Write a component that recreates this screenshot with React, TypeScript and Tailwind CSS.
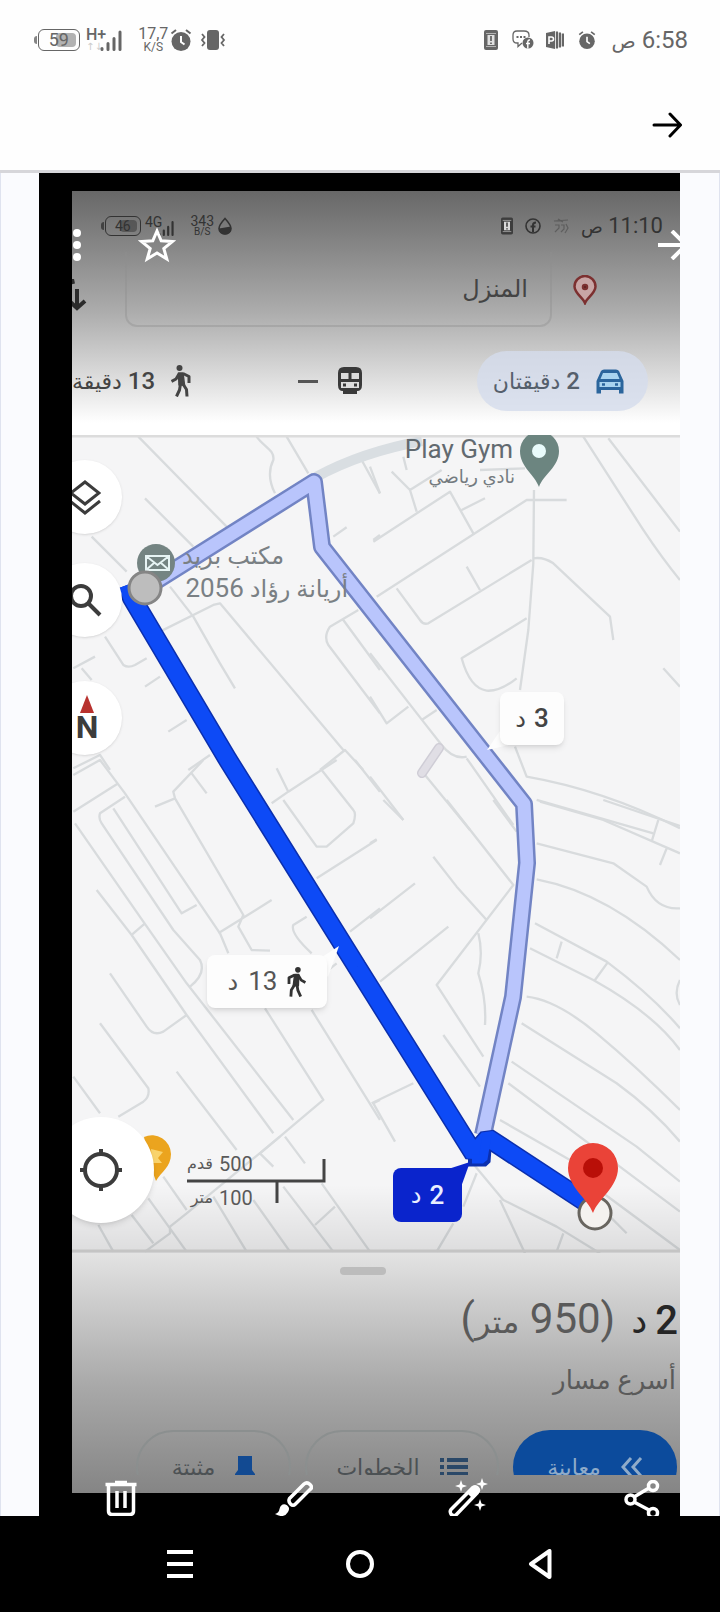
import React from "react";

type IconProps = { className?: string };

function ArrowRight({ className }: IconProps) {
  return (
    <svg viewBox="0 0 30 26" className={className} fill="none" stroke="currentColor" strokeWidth="3" strokeLinecap="round" strokeLinejoin="round">
      <path d="M2 13H28M18 2L28.500 13L18 24" />
    </svg>
  );
}

function SignalBars({ className }: IconProps) {
  return (
    <svg viewBox="0 0 22 22" className={className} stroke="currentColor" strokeWidth="3" strokeLinecap="round">
      <path d="M2 19.500V20.500M8 14.500V20.500M14 9.500V20.500M20 3V20.500" />
    </svg>
  );
}

function Alarm({ className }: IconProps) {
  return (
    <svg viewBox="0 0 22 24" className={className} fill="none" stroke="currentColor">
      <circle cx="11" cy="13.500" r="9.500" fill="currentColor" stroke="none" />
      <path d="M1.500 5.500L6 2M20.500 5.500L16 2" strokeWidth="2" />
      <path d="M11 8V14L14.500 16.500" stroke="#fff" strokeWidth="2" />
    </svg>
  );
}

function Vibrate({ className }: IconProps) {
  return (
    <svg viewBox="0 0 26 22" className={className} fill="none" stroke="currentColor" strokeWidth="1.800">
      <rect x="7" y="1" width="12" height="20" rx="3" fill="currentColor" stroke="none" />
      <path d="M2 5L4.500 8L2 11L4.500 14L2 17M24 5L21.500 8L24 11L21.500 14L24 17" />
    </svg>
  );
}

function PhoneAlert({ className }: IconProps) {
  return (
    <svg viewBox="0 0 14 20" className={className}>
      <rect width="14" height="20" rx="2" fill="currentColor" />
      <path d="M2 3.500H12M2 16.500H12" stroke="#fff" opacity=".5" />
      <rect x="3.500" y="5" width="7" height="10" fill="#fff" opacity=".8" />
      <path d="M7 6V11M7 12.500V14" stroke="currentColor" strokeWidth="1.800" />
    </svg>
  );
}

function ChatBubble({ className }: IconProps) {
  return (
    <svg viewBox="0 0 22 20" className={className} fill="none" stroke="currentColor">
      <path d="M10 13L6 16.500V13H5Q1 13 1 9V5Q1 1 5 1H12Q17 1 17 5V7" strokeWidth="1.300" />
      <path d="M4.500 7H6.500M8 7H10M11.500 7H13.500" strokeWidth="1.800" />
      <circle cx="16" cy="13" r="5.500" fill="currentColor" stroke="none" />
      <path d="M15.800 18.500V11.500Q16 9.800 18 10M14 13.500H18" stroke="#fff" strokeWidth="1.400" />
    </svg>
  );
}

function Publisher({ className }: IconProps) {
  return (
    <svg viewBox="0 0 18 18" className={className}>
      <path d="M0 2L9 0V18L0 16ZM9.800 .5H12V17.500H9.800ZM12.700 1.500H15V16.500H12.700ZM15.700 2.500H18V15.500H15.700Z" fill="currentColor" />
      <path d="M3 13V6H5.500Q7.500 6 7.500 8T5.500 10H3" fill="none" stroke="#fff" strokeWidth="1.600" />
    </svg>
  );
}

function Walker({ className }: IconProps) {
  return (
    <svg viewBox="0 0 20 32" className={className} fill="none" stroke="currentColor" strokeLinejoin="round">
      <circle cx="8.500" cy="3" r="3" fill="currentColor" stroke="none" />
      <path d="M7.500 8H12L13.500 20H8Z" fill="currentColor" strokeWidth="1.500" />
      <path d="M8 9L5 14L.5 16.500M12 8.500L18 11.500V18M9.500 19L8.500 25L5.500 31.500M12 19L15.500 24.500L16 31.500" strokeWidth="3" />
    </svg>
  );
}

function Train({ className }: IconProps) {
  return (
    <svg viewBox="0 0 24 28" className={className}>
      <path d="M6 0H18Q24 0 24 6V18Q24 24 19 24V27H5V24Q0 24 0 18V6Q0 0 6 0Z" fill="currentColor" />
      <path d="M3 6H10.500V12H3ZM13.500 6H21V12H13.500ZM3 15H21V21H3Z" fill="#ddd" />
      <path d="M5 18H8M16 18H19" stroke="currentColor" strokeWidth="3" />
    </svg>
  );
}

function Car({ className }: IconProps) {
  return (
    <svg viewBox="0 0 28 25" className={className}>
      <path d="M5 2Q6 .5 8 .5H20Q22 .5 23 2L27.500 12V24.500H23V21H5V24.500H.5V12Z" fill="#2b659c" />
      <path d="M7 4H21L23.500 10H4.500ZM3.500 13H24.500V18H3.500Z" fill="#a9d4ef" />
      <path d="M6 15.500H9M19 15.500H22" stroke="#2b659c" strokeWidth="2.500" />
    </svg>
  );
}

function Battery({ level }: { level: string }) {
  return (
    <span className="flex items-center gap-px">
      <span className="h-2 w-[3px] rounded-l-sm bg-current opacity-80" />
      <span className="relative flex h-full w-full items-center justify-center rounded-md border-[1.5px] border-current">
        <span className="absolute inset-y-[3px] right-[3px] w-1/2 rounded-sm bg-current opacity-50" />
        <span className="relative">{level}</span>
      </span>
    </span>
  );
}

/* Streets, one group per district; each is drawn at three times its map size. */
const districts = [
  {
    at: "translate(-12 -5) scale(.3333)",
    d: "M235 20L500 290M255 205L400 350M590 20C610 50 645 60 640 90C625 120 625 150 645 190M680 20L745 130M905 90L960 190M940 330L960 315M820 320L860 292M95 320L200 425M330 470L400 560L480 700L525 775M300 605L460 525L480 520L850 960M135 620L190 705Q205 715 225 705L260 685M40 715L105 680M65 715L95 750M255 770L300 740M325 905L380 870M385 1020L450 975M780 1020L855 960L910 1020M895 540L810 590Q790 620 805 645L960 850M850 570L960 720M40 1015L120 975L150 1020",
  },
  {
    at: "translate(298 -5) scale(.3333)",
    d: "M0 110L30 190M65 125L120 180L140 245M120 180L215 120M10 335L240 185L310 310M275 240L345 205M20 500L470 210L590 210M492 180L490 400L475 600L450 780M490 385Q520 380 550 400L720 560L730 630M485 390L175 580Q160 585 150 570L80 475M330 480L290 410M470 565L275 685Q300 775 350 782Q390 785 440 745M0 670L160 875L215 945Q250 990 290 980M155 870L200 840M0 800L50 880L115 830M0 1040L100 1170M165 1035L300 1200M290 985L430 1185M435 950L470 1040Q700 1080 930 1195M500 1110L850 1210M640 20L820 300Q880 390 930 450M715 25L930 305M880 715L930 770M330 120L465 115M100 80L110 120",
  },
  {
    at: "translate(-12 325) scale(.3333)",
    d: "M40 45L120 0L195 100L480 520L505 580M40 155L175 70M195 110L120 160Q115 175 125 190L340 510L420 600Q440 640 390 680M160 145L365 460L410 435M45 190L250 485L380 670L700 1080M215 525L255 490M110 390L215 525L380 765L640 1120M150 640L260 800Q280 830 310 815L380 765M120 790L265 985Q270 1010 250 1025L175 1070M40 950L120 1060M350 935L530 1170M285 140L345 115L340 95L430 0M395 40L440 100M345 115L550 465L535 500L575 570L630 572M475 520L635 420M650 25L685 95L635 130M685 95L830 0M670 120L770 260L800 260L880 190Q890 160 880 150L785 30M885 0L960 95M770 355L950 240M870 515L960 445M740 470L700 495Q690 520 755 580M805 630L830 610M615 745L790 1020L600 1180M755 750L960 1080M940 1030L960 1020",
  },
  {
    at: "translate(298 365) scale(.3333)",
    d: "M0 355L135 250M30 545L235 380M0 130L20 118M40 0L100 60M230 0L430 255L200 555L340 770M190 170L260 260L350 360M325 400Q340 460 325 520Q350 600 345 675M220 705L330 860M5 910L130 850M10 910L75 1025M370 0L440 95M510 5L700 60L930 160M700 0L930 78M865 60L845 125M890 145L870 195M500 130L730 190L830 260Q860 330 930 325M500 238Q720 280 930 480M495 370L710 485Q850 590 930 685M480 445L670 540Q850 640 930 750M575 425L560 475M715 485L675 540M470 590Q560 600 680 700T930 930M455 670L740 850Q850 930 930 1025M425 785L800 1040L930 1145M415 850L930 1235M390 960L600 1080M700 1180L930 1350M720 1250L770 1300M930 540Q910 580 930 615M300 1080L400 1200L560 1280L690 1360M320 1120L280 1220M390 1200L465 1360M250 1270L200 1355M580 1300L560 1355",
  },
  {
    at: "translate(-12 665) scale(.3333)",
    d: "M115 375L160 455M215 345L280 430M265 295L380 455M310 230L380 330M255 455L330 400L330 380L380 340M380 340L660 110M460 290L560 455M580 300L690 455M600 160L640 200M670 260L820 455M675 110L735 190M785 250L930 455M765 375L825 320",
  },
];

function MapCanvas() {
  return (
    <svg viewBox="0 0 608 818" className="block w-full bg-[#f5f5f6]" aria-hidden="true">
      <defs>
        <linearGradient id="shade" x1="0" y1="0" x2="0" y2="1">
          <stop offset="0" stopColor="#000" stopOpacity="0" />
          <stop offset="1" stopColor="#000" stopOpacity=".1" />
        </linearGradient>
      </defs>
      {districts.map((area) => (
        <path key={area.at} d={area.d} transform={area.at} fill="none" stroke="#d8dbdd" strokeWidth="7" strokeLinejoin="round" />
      ))}
      <path d="M244 42Q290 17 350 6" fill="none" stroke="#d9dee2" strokeWidth="10" />
      <path d="M350 338L367 313" stroke="#cfcdd6" strokeWidth="10" strokeLinecap="round" />
      <path d="M350 338L367 313" stroke="#e0dee5" strokeWidth="7" strokeLinecap="round" />
      <rect y="750" width="608" height="68" fill="url(#shade)" />
      <path d="M0 1H608" stroke="#dcdcdc" strokeWidth="3" />
      <path d="M0 816H608" stroke="#c4c4c4" strokeWidth="3" />

      {/* Alternative route */}
      <g fill="none" strokeLinejoin="round">
        <path d="M73 153L242 47L250 112L452 369L455 428L441 562L411 700" stroke="#7284c4" strokeWidth="18" />
        <path d="M73 153L242 47L250 112L452 369L455 428L441 562L411 700" stroke="#b9c5fc" strokeWidth="13" />
      </g>

      {/* Post office */}
      <circle cx="84" cy="128" r="19" fill="#748482" />
      <path d="M74 121H97V135H74ZM74 121L85.500 130L97 121M74 135L82 128M97 135L89 128" fill="none" stroke="#e7f4f4" strokeWidth="2" />

      {/* Main route */}
      <g fill="none" strokeLinejoin="bevel">
        <path d="M55 150L60 163L156 325L285 532L402 719L416 703L512 766" stroke="#0b2fae" strokeWidth="20" />
        <path d="M396 727L414 727L416 700" stroke="#0b2fae" strokeWidth="9" />
        <path d="M55 150L60 163L156 325L285 532L402 719L416 703L512 766" stroke="#0d4af6" strokeWidth="17" />
        <path d="M400 724L411 724L415 700" stroke="#0d4af6" strokeWidth="9" />
      </g>
      <circle cx="73" cy="153" r="16" fill="#bdbdbd" stroke="#858585" strokeWidth="3" />

      {/* Gym pin */}
      <path d="M467 52C463 40 448 32 448 16A19.500 19.500 0 0 1 487 16C487 32 471 40 467 52Z" fill="#6c8580" />
      <circle cx="467" cy="16" r="7" fill="#e9fbfb" />

      {/* Destination */}
      <circle cx="523" cy="778" r="16" fill="#f4f2ef" stroke="#68655f" strokeWidth="3" />
      <path d="M521 778C516 764 496 752 496 733A25 25 0 0 1 546 733C546 752 526 764 521 778Z" fill="#ea4338" />
      <circle cx="521" cy="733" r="10" fill="#b90f08" />

      {/* Bubble tails */}
      <path d="M428 296L415 315L446 308Z" fill="#fdfdfd" />
      <path d="M244 526L267 511L256 542Z" fill="#fdfdfd" />
      <path d="M370 736L398 727L389 752Z" fill="#0a24cc" />

      {/* Place pin half behind the locate button */}
      <path d="M72 702A19 19 0 0 1 99 719C99 732 89 737 84 746L78 730Z" fill="#eba41e" />
      <path d="M79 714L91 717L86 723L90 728L80 728Z" fill="#f9d36d" />

      {/* Scale bar */}
      <path d="M115 746H252V724M205 746V768" fill="none" stroke="#444" strokeWidth="3" />
    </svg>
  );
}

const roundButton = "absolute -left-6 flex size-[74px] items-center justify-center rounded-full bg-white shadow-sm";
const bubble = "absolute flex items-center justify-center rounded-lg text-[26px]";

export default function App() {
  return (
    <div className="flex min-h-screen w-full flex-col bg-[#fafbfe] font-[Roboto,'DejaVu_Sans',sans-serif]">
      {/* Phone status bar */}
      <div className="flex h-20 items-center justify-between bg-[#fefefe] pl-[34px] pr-8 text-[#666]">
        <div className="flex items-center">
          <div className="flex h-[22px] w-[46px] text-lg *:w-full">
            <Battery level="59" />
          </div>
          <div className="ml-1.5 flex h-[22px] items-end">
            <div className="flex h-full flex-col text-base leading-3 font-medium">
              <span>H+</span>
              <span className="text-[10px] leading-3 text-[#ccc]">↑↓</span>
            </div>
            <SignalBars className="-ml-1.5 size-[22px]" />
          </div>
          <div className="ml-4 flex flex-col items-center">
            <span className="text-base leading-[14px]">17,7</span>
            <span className="text-xs leading-3">K/S</span>
          </div>
          <Alarm className="ml-0.5 h-6 w-[22px]" />
          <Vibrate className="ml-2 h-[22px] w-[26px]" />
        </div>
        <div className="flex items-center">
          <PhoneAlert className="h-5 w-3.5" />
          <ChatBubble className="ml-3.5 h-5 w-[22px]" />
          <Publisher className="ml-3 size-[18px]" />
          <Alarm className="ml-3.5 h-5 w-[18px]" />
          <span dir="rtl" className="ml-4 text-2xl">
            6:58 <span className="text-xl">ص</span>
          </span>
        </div>
      </div>

      {/* App bar */}
      <header className="flex h-[93px] items-center justify-end border-b-[3px] border-[#d6d6da] bg-[#fefefe] pr-[38px]">
        <button aria-label="رجوع" className="text-black">
          <ArrowRight className="h-[26px] w-[30px]" />
        </button>
      </header>

      <main className="flex-1 border-x border-[#dfe3ef] pr-[39px] pl-[38px]">
        <div className="relative h-full overflow-hidden bg-black pt-[18px] pb-[23px] pl-[33px]">
          <div className="relative overflow-hidden">
            {/* Directions header */}
            <div className="h-[244px] bg-linear-to-b from-[#686868] via-[#adadad] via-50% to-white to-95%">
              <div className="flex h-[61px] items-center justify-between pt-2 pr-[17px] pl-[29px] text-[#333]">
                <div className="flex items-center">
                  <div className="flex h-5 w-10 text-sm *:w-full">
                    <Battery level="46" />
                  </div>
                  <div className="ml-1 flex h-5 items-end">
                    <span className="self-start text-sm leading-3">4G</span>
                    <SignalBars className="-ml-1 h-4 w-4" />
                  </div>
                  <div className="ml-4 flex flex-col items-center">
                    <span className="text-sm leading-3">343</span>
                    <span className="text-[10px] leading-[10px]">B/S</span>
                  </div>
                  <svg viewBox="0 0 14 18" className="ml-1 h-[18px] w-3.5">
                    <path d="M7 1.500Q13 8 13 11.500A6 5.500 0 0 1 1 11.500Q1 8 7 1.500Z" fill="none" stroke="currentColor" strokeWidth="1.600" />
                    <path d="M1 11.500L13 9.500V12A6 5.500 0 0 1 1 12Z" fill="currentColor" />
                  </svg>
                </div>
                <div className="flex items-center gap-3">
                  <PhoneAlert className="h-[18px] w-3 text-[#3d3d3d]" />
                  <svg viewBox="0 0 16 16" className="size-4" fill="none" stroke="currentColor" strokeWidth="1.600">
                    <circle cx="8" cy="8" r="7" />
                    <path d="M8 14V7Q8 4.500 11 4.500M5.500 8.500H10.500" strokeWidth="2" />
                  </svg>
                  <svg viewBox="0 0 16 16" className="size-4 opacity-40" fill="none" stroke="currentColor" strokeWidth="1.200">
                    <path d="M1 3L15 2M5 1L10 4M2 7H6V10L2 14M8 7H11V11L8 14M13 6L15 10L12 15" />
                  </svg>
                  <span dir="rtl" className="text-[22px]">
                    11:10 <span className="text-lg">ص</span>
                  </span>
                </div>
              </div>

              <div className="flex h-[75px] items-center justify-between">
                <button aria-label="تبديل" className="h-full w-4 overflow-hidden pt-3 text-[#2b2b2b]">
                  <svg viewBox="0 0 16 34" className="h-[34px] w-4" fill="none" stroke="currentColor" strokeWidth="4">
                    <path d="M0 0L1 5M5 10V29M-5 20L5 29L13 22" />
                  </svg>
                </button>
                <input
                  aria-label="الوجهة"
                  dir="rtl"
                  readOnly
                  value="المنزل"
                  className="ml-[37px] h-full min-w-0 flex-1 rounded-b-xl border-x-2 border-b-2 border-[#8f8f8f]/40 bg-transparent px-[22px] text-2xl text-[#444] outline-none"
                />
                <svg viewBox="0 0 24 30" className="mr-[83px] ml-[21px] h-[30px] w-6" fill="#c8a5a5" stroke="#7c3030" strokeWidth="2.500">
                  <path d="M12 28C10 23 1.500 18 1.500 11.500A10.500 10.500 0 0 1 22.500 11.500C22.500 18 14 23 12 28Z" />
                  <circle cx="12" cy="12" r="2" fill="#3c1414" />
                </svg>
              </div>

              <div className="flex items-center justify-between pt-6 pr-8 text-2xl text-[#444]">
                <button className="flex items-center gap-4 whitespace-nowrap">
                  <span dir="rtl">
                    <b className="font-medium">13</b> <span className="text-[22px]">دقيقة</span>
                  </span>
                  <Walker className="h-8 w-5" />
                </button>
                <button className="mr-2 flex items-center gap-5 text-[#3a3a3a]">
                  <span className="h-[3px] w-5 bg-[#555]" />
                  <Train className="h-7 w-6" />
                </button>
                <button className="flex h-[60px] items-center gap-4 rounded-full bg-[#d4dcec]/80 pr-6 pl-4 whitespace-nowrap text-[#56606c]">
                  <span dir="rtl">
                    <b className="font-medium">2</b> <span className="text-[22px]">دقيقتان</span>
                  </span>
                  <Car className="h-[25px] w-7" />
                </button>
              </div>
            </div>

            {/* Map */}
            <section aria-label="خريطة" className="relative">
              <MapCanvas />
              <span className="absolute top-0 right-[167px] text-[26px] leading-7 text-[#626a70]">Play Gym</span>
              <span dir="rtl" className="absolute top-7 right-[165px] text-lg leading-7 text-[#747b80]">نادي رياضي</span>
              <div dir="rtl" className="absolute top-[105px] left-[110px] text-2xl text-[#7a8084]">
                <div className="pr-16 leading-8">مكتب بريد</div>
                <div className="leading-8 whitespace-nowrap">
                  أريانة رؤاد <span className="text-[26px]">2056</span>
                </div>
              </div>

              <button aria-label="الطبقات" className={`${roundButton} top-[25px]`}>
                <svg viewBox="0 0 32 36" className="h-9 w-8" fill="none" stroke="#3c3c3c" strokeWidth="3">
                  <path d="M16 3L30 14L16 25L2 14ZM1 22L16 34L31 22" />
                </svg>
              </button>
              <button aria-label="بحث" className={`${roundButton} top-[128px]`}>
                <svg viewBox="0 0 34 34" className="size-[34px]" fill="none" stroke="#3c3c3c" strokeWidth="4">
                  <circle cx="13" cy="13" r="10" />
                  <path d="M20 20L32 32" />
                </svg>
              </button>
              <button aria-label="الشمال" className={`${roundButton} top-[246px] flex-col pl-1 text-[32px] leading-7 font-bold text-[#3c3c3c]`}>
                <svg viewBox="0 0 14 18" className="h-[18px] w-3.5">
                  <path d="M7 0L14 18H0Z" fill="#b8322f" />
                </svg>
                N
              </button>
              <button aria-label="موقعي" className="absolute top-[682px] -left-6 flex size-[106px] items-center justify-center rounded-full bg-white shadow-md">
                <svg viewBox="0 0 42 42" className="size-[42px]" fill="none" stroke="#3c3c3c" strokeWidth="4">
                  <circle cx="21" cy="21" r="16" />
                  <path d="M21 0V7M21 35V42M0 21H7M35 21H42" />
                </svg>
              </button>

              <div dir="rtl" className={`${bubble} top-[257px] left-[428px] h-[53px] w-16 gap-2 bg-[#fdfdfd] font-medium text-[#444] shadow-md`}>
                <span>3</span>
                <span className="text-2xl">د</span>
              </div>
              <div dir="rtl" className={`${bubble} top-[520px] left-[135px] h-[53px] w-[120px] gap-2.5 bg-[#fdfdfd] text-[#555] shadow-md`}>
                <Walker className="h-[30px] w-[19px] -scale-x-100 text-[#333]" />
                <span>13</span>
                <span className="text-2xl">د</span>
              </div>
              <div dir="rtl" className={`${bubble} top-[733px] left-[321px] h-[54px] w-[69px] gap-2 bg-[#0a24cc] font-medium text-[#e9efff]`}>
                <span>2</span>
                <span className="text-2xl">د</span>
              </div>
              <div dir="rtl" className="absolute top-[716px] left-[115px] text-xl text-[#5a5a5a]">
                <div className="flex h-[26px] items-center gap-1.5 leading-6">
                  500 <span className="text-base">قدم</span>
                </div>
                <div className="mt-2 flex h-[26px] items-center gap-1.5 leading-6">
                  100 <span className="text-base">متر</span>
                </div>
              </div>
            </section>

            {/* Route sheet */}
            <section dir="rtl" className="flex h-[240px] flex-col bg-linear-to-b from-[#e3e3e3] via-[#a9a9a9] via-55% to-[#858585]">
              <div className="mt-3.5 mr-[294px] h-2 w-[46px] rounded-sm bg-[#bcbcbc]" />
              <h1 className="mt-[18px] flex items-center pr-0.5 text-[42px] leading-[52px] text-[#5a5a5a]">
                <span className="flex items-center gap-2 text-[40px] font-medium text-[#262626]">
                  2 <span className="text-4xl">د</span>
                </span>
                <span className="mr-4">
                  (950 <span className="text-[32px]">متر</span>)
                </span>
              </h1>
              <p className="mt-3 pr-1 text-[26px] leading-10 text-[#5a5a5a]">أسرع مسار</p>
              <div className="mt-auto mb-[18px] flex h-[45px] shrink-0 gap-3.5 overflow-hidden pr-[3px] text-[22px] whitespace-nowrap">
                <button className="flex h-[74px] w-[164px] items-center justify-center gap-5 rounded-[40px] bg-[#0c4b9c] text-[#8fabc9]">
                  <svg viewBox="0 0 22 20" className="h-5 w-[22px]" fill="none" stroke="currentColor" strokeWidth="3">
                    <path d="M10 1L2 10L10 19M20 1L12 10L20 19" />
                  </svg>
                  معاينة
                </button>
                <button className="flex h-[74px] w-[194px] items-center justify-center gap-5 rounded-[40px] border-2 border-[#8b8f8f] text-[#4c5154]">
                  <svg viewBox="0 0 28 20" className="h-5 w-7" stroke="#2a4868" strokeWidth="4">
                    <path d="M7 3H28M7 10H28M7 17H28M0 3H4M0 10H4M0 17H4" />
                  </svg>
                  الخطوات
                </button>
                <button className="flex h-[74px] w-[155px] items-center justify-center gap-5 rounded-[40px] border-2 border-[#8b8f8f] text-[#4c5154]">
                  <svg viewBox="0 0 20 22" className="h-[22px] w-5" fill="#124a92">
                    <path d="M3 0H17V14L20 18V21H0V18L3 14Z" />
                  </svg>
                  مثبتة
                </button>
              </div>
            </section>
          </div>

          {/* Gallery controls laid over the photo */}
          <div className="absolute top-[54px] right-0 left-[33px] flex items-center justify-between text-white">
            <div className="flex items-center">
              <button aria-label="المزيد">
                <svg viewBox="0 0 10 34" className="h-[34px] w-2.5" fill="currentColor">
                  <circle cx="5" cy="5" r="4" />
                  <circle cx="5" cy="17" r="4" />
                  <circle cx="5" cy="29" r="4" />
                </svg>
              </button>
              <button aria-label="المفضلة" className="ml-14">
                <svg viewBox="0 0 38 36" className="h-9 w-[38px]" fill="none" stroke="currentColor" strokeWidth="3">
                  <path d="M19 4L23.200 13.800L34.500 14.500L25.800 21.500L28.800 32L19 26L9.200 32L12.200 21.500L3.500 14.500L14.800 13.800Z" />
                </svg>
              </button>
            </div>
            <button aria-label="السابق" className="-mr-2">
              <svg viewBox="0 0 30 30" className="size-[30px]" fill="none" stroke="currentColor" strokeWidth="4">
                <path d="M0 15H27M14 1L28 15L14 29" />
              </svg>
            </button>
          </div>
          <div className="absolute inset-x-0 -bottom-0.5 flex items-end justify-between pr-5 pl-16 text-white">
            <button aria-label="حذف">
              <svg viewBox="0 0 36 38" className="h-[38px] w-9" fill="none" stroke="currentColor" strokeWidth="3.500">
                <path d="M2.500 4.500H33.500M12 2.500H24" />
                <path d="M5.500 5V31Q5.500 34.500 9 34.500H27Q30.500 34.500 30.500 31V5M14 11V28M22 11V28" />
              </svg>
            </button>
            <button aria-label="تعديل">
              <svg viewBox="0 0 38 38" className="size-[38px]" fill="none" stroke="currentColor" strokeWidth="3.500" strokeLinejoin="round">
                <path d="M14.500 18.500L29 4Q32 1.500 35 4.500T35 9.500L20.500 24Q18 26.500 15.500 24T14.500 18.500Z" />
                <path d="M0 34Q4 33 4.500 29Q6 23.500 10.500 24.500Q16 27 13 32Q9 39 0 34Z" fill="currentColor" stroke="none" />
              </svg>
            </button>
            <button aria-label="تحسين">
              <svg viewBox="0 0 40 40" className="size-10" fill="currentColor">
                <path d="M3 31.500L25 9.500Q27.500 8 29.500 10T29.500 14.500L8 37Q4.500 38.500 3 36T3 31.500Z" fill="none" stroke="currentColor" strokeWidth="3.500" />
                <path d="M19 15L25 9.500Q27.500 8 29.500 10T29.500 14.500L24 20Z" />
                <path d="M13 2L14.500 6.500L19 8L14.500 9.500L13 14L11.500 9.500L7 8L11.500 6.500ZM34 0L35.500 4.500L40 6L35.500 7.500L34 12L32.500 7.500L28 6L32.500 4.500ZM32 21L33.500 25.500L38 27L33.500 28.500L32 33L30.500 28.500L26 27L30.500 25.500Z" />
              </svg>
            </button>
            <button aria-label="مشاركة">
              <svg viewBox="0 0 36 38" className="h-[38px] w-9" fill="none" stroke="currentColor" strokeWidth="3.500">
                <path d="M10 17L25 8M10 22L25 30" />
                <circle cx="6.500" cy="19.500" r="4.500" />
                <circle cx="29" cy="6" r="4.500" />
                <circle cx="29" cy="33" r="4.500" />
              </svg>
            </button>
          </div>
        </div>
      </main>

      {/* System navigation */}
      <nav className="grid h-24 grid-cols-3 place-items-center bg-black px-[12.5%] text-white">
        <button aria-label="التطبيقات">
          <svg viewBox="0 0 26 28" className="h-7 w-[26px]" stroke="currentColor" strokeWidth="4">
            <path d="M0 2H26M0 14H26M0 26H26" />
          </svg>
        </button>
        <button aria-label="الرئيسية">
          <svg viewBox="0 0 28 28" className="size-7" fill="none" stroke="currentColor" strokeWidth="4">
            <circle cx="14" cy="14" r="12" />
          </svg>
        </button>
        <button aria-label="رجوع">
          <svg viewBox="0 0 24 30" className="h-[30px] w-6" fill="none" stroke="currentColor" strokeWidth="4" strokeLinejoin="round">
            <path d="M21.500 2V28L3 15Z" />
          </svg>
        </button>
      </nav>
    </div>
  );
}
